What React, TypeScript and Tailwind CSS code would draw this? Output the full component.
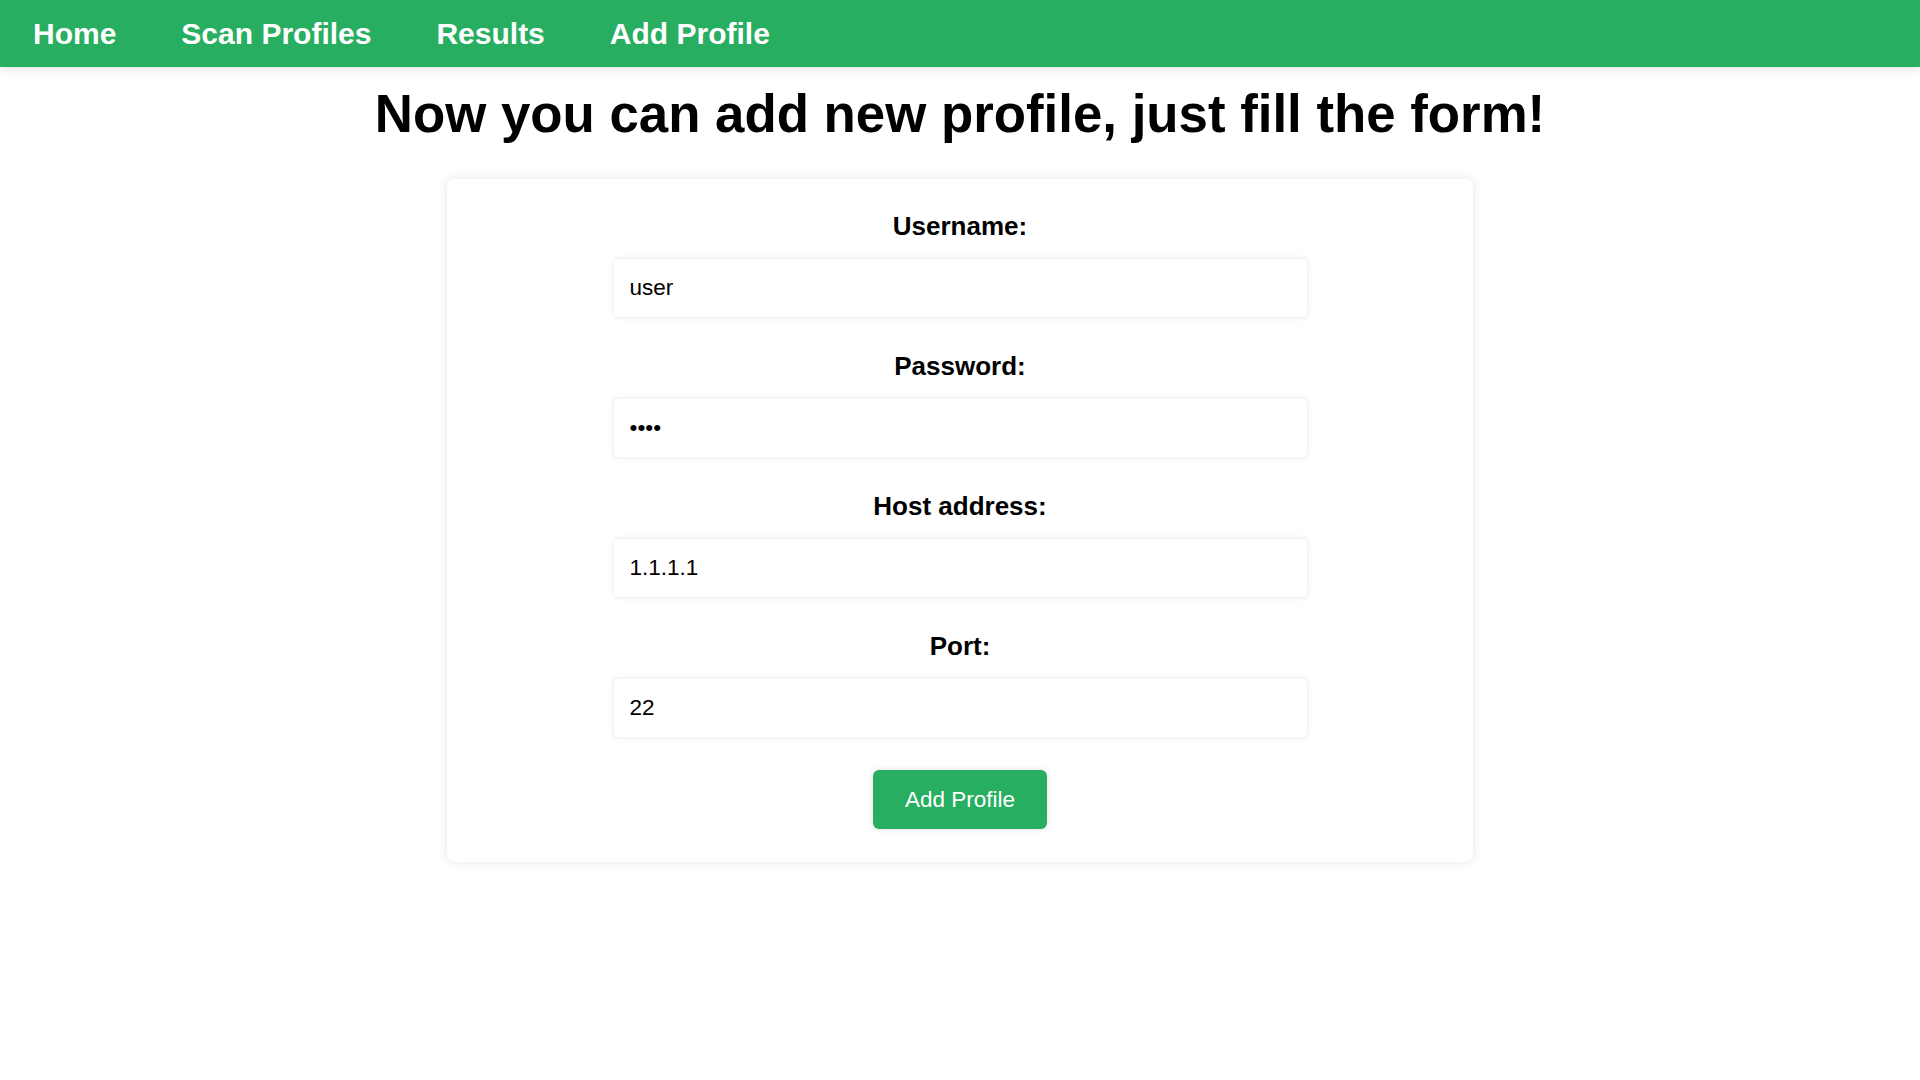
import React from "react";

const fields = [
  { label: "Username:", type: "text", value: "user" },
  { label: "Password:", type: "password", value: "pass" },
  { label: "Host address:", type: "text", value: "1.1.1.1" },
  { label: "Port:", type: "text", value: "22" },
];

export default function App() {
  return (
    <div className="min-h-screen bg-white text-black font-['Liberation_Sans',Arial,sans-serif]">
      <nav className="h-[67px] bg-[#27ae60] flex items-center pl-[33px] gap-[65px] shadow-[0_2px_10px_rgba(0,0,0,0.12)] relative">
        {["Home", "Scan Profiles", "Results", "Add Profile"].map((t) => (
          <a key={t} href="#" className="text-[30px] font-bold text-white leading-[34px] no-underline">
            {t}
          </a>
        ))}
      </nav>
      <h1 className="mt-[16px] text-center text-[52.8px] font-bold leading-[61px]">
        Now you can add new profile, just fill the form!
      </h1>
      <div className="mx-auto mt-[35px] w-[1026px] rounded-[8px] bg-white pt-[32px] pb-[33px] shadow-[0_0_12px_rgba(0,0,0,0.1)] flex flex-col items-center">
        {fields.map((f, i) => (
          <div key={f.label} className={"flex flex-col items-center " + (i > 0 ? "mt-[34px]" : "")}>
            <label className="text-[26px] font-bold leading-[30px] mb-[18px]">{f.label}</label>
            <input
              type={f.type}
              defaultValue={f.value}
              readOnly
              className="w-[693px] h-[58px] rounded-[5px] bg-white px-[16px] text-[22.5px] text-black outline-none shadow-[0_0_6px_rgba(0,0,0,0.1)] font-['Liberation_Sans',Arial,sans-serif]"
            />
          </div>
        ))}
        <button className="mt-[33px] h-[59px] px-[32px] rounded-[6px] bg-[#27ae60] text-white text-[22.5px] shadow-[0_0_6px_rgba(0,0,0,0.12)] font-['Liberation_Sans',Arial,sans-serif]">
          Add Profile
        </button>
      </div>
    </div>
  );
}
